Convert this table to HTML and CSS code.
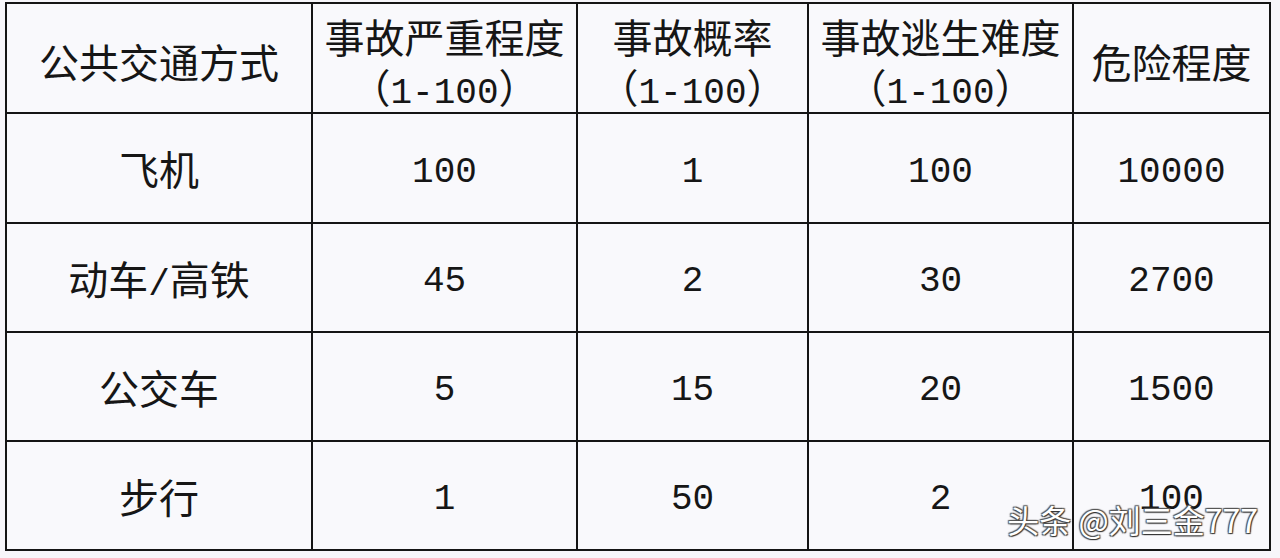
FILE: index.html
```html
<!DOCTYPE html>
<html lang="zh-CN">
<head>
<meta charset="utf-8">
<title>公共交通方式危险程度</title>
<link rel="stylesheet" href="styles.css">
</head>
<body>
<div class="sheet">
  <table class="grid">
    <colgroup>
      <col class="c1"><col class="c2"><col class="c3"><col class="c4"><col class="c5">
    </colgroup>
    <thead>
      <tr class="row-head">
        <th class="cn">公共交通方式</th>
        <th class="cn"><span class="line">事故严重程度</span><span class="line range">（<span class="mono">1-100</span>）</span></th>
        <th class="cn"><span class="line">事故概率</span><span class="line range">（<span class="mono">1-100</span>）</span></th>
        <th class="cn"><span class="line">事故逃生难度</span><span class="line range">（<span class="mono">1-100</span>）</span></th>
        <th class="cn">危险程度</th>
      </tr>
    </thead>
    <tbody>
      <tr class="row-a"><td class="cn">飞机</td><td class="num">100</td><td class="num">1</td><td class="num">100</td><td class="num">10000</td></tr>
      <tr class="row-b"><td class="cn">动车<span class="mono">/</span>高铁</td><td class="num">45</td><td class="num">2</td><td class="num">30</td><td class="num">2700</td></tr>
      <tr class="row-b"><td class="cn">公交车</td><td class="num">5</td><td class="num">15</td><td class="num">20</td><td class="num">1500</td></tr>
      <tr class="row-b"><td class="cn">步行</td><td class="num">1</td><td class="num">50</td><td class="num">2</td><td class="num">100</td></tr>
    </tbody>
  </table>
  <div class="watermark">头条 @刘三金777</div>
</div>
</body>
</html>
```

FILE: styles.css
```css
html, body {
  margin: 0;
  padding: 0;
  background: #f7f6fa;
}

.sheet {
  position: relative;
  width: 1280px;
  height: 558px;
  padding: 2px 0 0 5px;
  box-sizing: border-box;
  overflow: hidden;
}

.grid {
  border-collapse: collapse;
  table-layout: fixed;
  width: 1266px;
  background: #f9f9fc;
  color: #161616;
}

.c1 { width: 306px; }
.c2 { width: 265px; }
.c3 { width: 231px; }
.c4 { width: 265px; }
.c5 { width: 197px; }

.row-head { height: 110px; }
.row-a { height: 110px; }
.row-b { height: 109px; }

.grid th,
.grid td {
  border: 2px solid #151515;
  padding: 0;
  text-align: center;
  vertical-align: middle;
  font-weight: 400;
}

.grid thead th {
  line-height: 50px;
  padding-top: 6px;
}

.line {
  display: block;
  height: 50px;
  overflow: visible;
}

.cn {
  font-family: "Noto Sans CJK SC", "Noto Sans", sans-serif;
  font-size: 40px;
  letter-spacing: 0;
}

.range {
  font-size: 40px;
}

.mono {
  font-family: "Liberation Mono", "DejaVu Sans Mono", monospace;
  font-size: 36px;
}

.num {
  font-family: "Liberation Mono", "DejaVu Sans Mono", monospace;
  font-size: 36px;
}

.grid td.num { padding-top: 8px; }

.watermark {
  position: absolute;
  right: 22px;
  bottom: 16px;
  font-family: "Noto Sans CJK SC", "Noto Sans", sans-serif;
  font-size: 32px;
  letter-spacing: 0;
  color: #ffffff;
  text-shadow: 1px 1px 1px #333, -1px -1px 1px #555, 1px -1px 1px #555, -1px 1px 1px #555;
}
```
